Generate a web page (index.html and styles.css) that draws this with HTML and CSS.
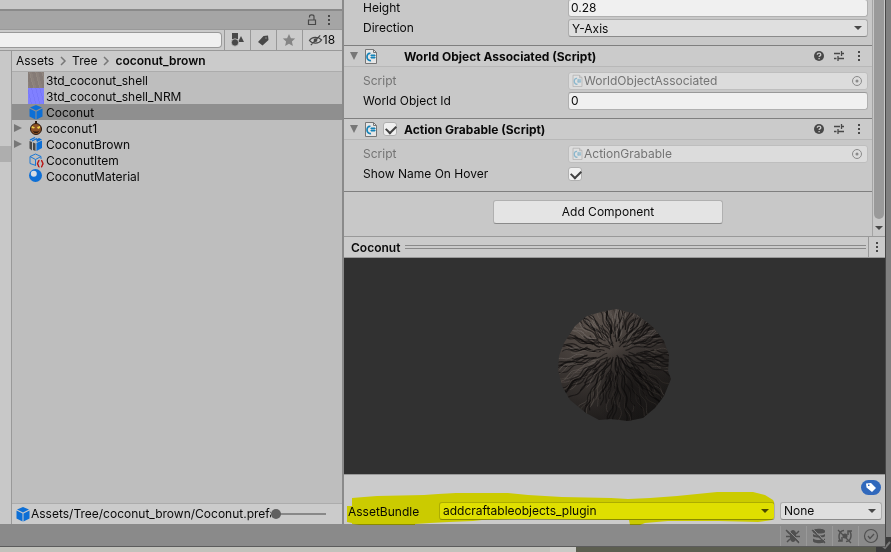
FILE: index.html
```
<!DOCTYPE html>
<html lang="en">
  <head>
    <meta charset="UTF-8" />
    <meta name="viewport" content="width=device-width, initial-scale=1.0" />
    <title>Coconut - Editor</title>
    <link rel="stylesheet" href="styles.css">
    <script src="coconut.js" defer></script>
  </head>
  <body>
    <svg class="symbols" aria-hidden="true">
      <symbol id="cube" viewBox="0 0 16 16">
        <path fill="#0d6fd6" d="M8 1l6 2.600L8 6.400 2 3.600zM1.500 4.600l6 2.800v8L1.500 12.500zM14.500 4.600l-6 2.800v8l6-2.900z"/>
      </symbol>
      <symbol id="script" viewBox="0 0 16 16">
        <path fill="#e6e6e6" stroke="#767676" d="M2.500 1.500h8l3 3v11h-11z"/>
        <path fill="none" stroke="#767676" d="M10.500 1.500v3h3"/>
        <path fill="none" stroke="#1583b8" stroke-width="1.700" d="M7.500 5.500C5 5 4 7 4 9s1.500 4 4 3.500"/>
        <path fill="none" stroke="#1583b8" d="M9 6v5M11 6v5M7.500 7.500h5M7.500 9.500h5"/>
      </symbol>
      <symbol id="dots" viewBox="0 0 16 16">
        <path fill="#484848" d="M7 3h2v2H7zM7 7h2v2H7zM7 11h2v2H7z"/>
      </symbol>
      <symbol id="help" viewBox="0 0 16 16">
        <circle cx="8" cy="8" r="5" fill="#484848"/>
        <path fill="none" stroke="#cbcbcb" stroke-width="1.300" d="M6.300 6.700c0-2.200 3.500-2.200 3.500 0 0 1.200-1.700 1.200-1.700 2.400M8.100 10v1.300"/>
      </symbol>
      <symbol id="preset" viewBox="0 0 16 16">
        <path fill="none" stroke="#484848" stroke-width="1.300" d="M3 5.500h6M11 5.500h2M10.500 3v5M3 10.500h2.500M7 8v5M7 10.500h6"/>
      </symbol>
      <symbol id="target" viewBox="0 0 16 16">
        <circle cx="8" cy="8" r="4.500" fill="none" stroke="#8a8a8a"/>
        <circle cx="8" cy="8" r="1.500" fill="#8a8a8a"/>
      </symbol>
    </svg>

    <div class="editor">
      <div class="panels">
        <section class="project">
          <div class="above"></div>
          <div class="tabs">
            <button aria-label="Lock"><svg viewBox="0 0 16 16"><path fill="none" stroke="#484848" stroke-width="1.200" d="M4.500 8h7v4.500h-7zM5.500 5.500v-1c0-2.200 4.500-2.200 4.500 0V8"/></svg></button>
            <button aria-label="Project menu"><svg><use href="#dots"/></svg></button>
          </div>
          <div class="toolbar">
            <input class="search" type="text" aria-label="Search" />
            <button aria-label="Search by type"><svg viewBox="0 0 16 16"><path fill="#484848" d="M3 1h6v6H3zM12 4l3 6H9z"/><circle cx="6" cy="10.500" r="3.700" fill="#484848" stroke="#cbcbcb" stroke-width=".8"/></svg></button>
            <button aria-label="Search by label"><svg viewBox="0 0 16 16"><path fill="#484848" fill-rule="evenodd" d="M3 10l5.500-6 4.500-.5.500 4.500-6 5.500zM10.500 5.500v1h1v-1z"/></svg></button>
            <button aria-label="Save search"><svg viewBox="0 0 16 16"><path fill="#858585" d="M8 2l1.900 4.200 4.300.4-3.300 3 1 4.400L8 11.700 4.100 14l1-4.400-3.300-3 4.300-.4z"/></svg></button>
            <button class="hidden-count"><svg viewBox="0 0 16 16"><path fill="none" stroke="#484848" stroke-width="1.300" d="M1.500 8.500C4 4.500 11 4 14.500 8c-3 4.500-10 4.500-13 .5zM3 13.500L13 3"/><circle cx="8" cy="8" r="2" fill="#484848"/></svg>18</button>
          </div>
          <div class="browser">
            <div class="tree"><div class="tree-row"></div></div>
            <div class="files">
              <nav class="crumbs">
                <a href="#">Assets</a>
                <svg viewBox="0 0 8 10"><path d="M2 1l4 4-4 4"/></svg>
                <a href="#">Tree</a>
                <svg viewBox="0 0 8 10"><path d="M2 1l4 4-4 4"/></svg>
                <a href="#" class="current">coconut_brown</a>
              </nav>
              <ul class="list">
                <li><span class="icon shell"></span>3td_coconut_shell</li>
                <li><span class="icon normal-map"></span>3td_coconut_shell_NRM</li>
                <li class="selected"><svg class="icon"><use href="#cube"/></svg>Coconut</li>
                <li class="folded"><svg class="icon" viewBox="0 0 16 16"><path fill="#2b1a10" d="M7 1h2v3H7z"/><circle cx="8" cy="9" r="5.500" fill="#8c5125" stroke="#2b1a10"/><path fill="#efd34c" d="M4 6l3 1.500-1 1L3.500 8zM9 7l3-1v2l-2 1z"/><path fill="#2b1a10" d="M4.500 10.500l2 1h3l2-1-2 2.500H6.500z"/></svg>coconut1</li>
                <li class="folded"><svg class="icon" viewBox="0 0 16 16"><path fill="#0d6fd6" d="M8 3.500l3-1.500 3 1.500-5 2.500zM8.500 7L14 4.500v7.500l-5.500 3z"/><path fill="#484848" d="M1.500 5L4 6v8.500l-2.500-2zM5 6.500l2.500 1V15L5 14z"/><path fill="none" stroke="#0d6fd6" stroke-width="1.300" d="M2 4l5-2.500M4 5l5-2.500"/></svg>CoconutBrown</li>
                <li><svg class="icon" viewBox="0 0 16 16"><path fill="none" stroke="#1c78d4" d="M8 13.500L2 11.500v-7L7.500 2 13 4.500V7M2 4.500l5.500 3L13 4.500M7.500 7.500v6"/><path fill="none" stroke="#b81414" stroke-width="1.400" d="M11.500 8.500c-2 0-.5 2.800-2.500 3.200 2 .4.500 3.300 2.500 3.300M13 8.500c2 0 .5 2.800 2.500 3.200-2 .4-.5 3.300-2.500 3.300"/></svg>CoconutItem</li>
                <li><svg class="icon" viewBox="0 0 16 16"><circle cx="7.500" cy="7.500" r="6.500" fill="#0d6fd6"/><circle cx="5.800" cy="5.800" r="3" fill="#d4dce4"/></svg>CoconutMaterial</li>
              </ul>
              <footer class="path">
                <svg class="icon"><use href="#cube"/></svg>
                <span>Assets/Tree/coconut_brown/Coconut.prefab</span>
                <input type="range" min="0" max="100" value="0" aria-label="Icon size" />
              </footer>
            </div>
          </div>
        </section>

        <section class="inspector">
          <div class="scroll">
            <div class="components">
              <div class="fields first">
                <div class="row"><label for="height">Height</label><input class="field" id="height" type="text" value="0.28" /></div>
                <div class="row"><label for="direction">Direction</label><div class="dropdown"><select class="field" id="direction"><option>Y-Axis</option></select></div></div>
              </div>
              <div class="component">
                <header>
                  <span class="fold"></span><svg class="icon"><use href="#script"/></svg>
                  <span class="tick"></span>
                  <h2>World Object Associated (Script)</h2>
                  <button aria-label="Help"><svg><use href="#help"/></svg></button>
                  <button aria-label="Presets"><svg><use href="#preset"/></svg></button>
                  <button aria-label="Component menu"><svg><use href="#dots"/></svg></button>
                </header>
                <div class="fields">
                  <div class="row disabled"><span class="label">Script</span><div class="field object"><svg><use href="#script"/></svg><span>WorldObjectAssociated</span><svg><use href="#target"/></svg></div></div>
                  <div class="row"><label for="world-id">World Object Id</label><input class="field" id="world-id" type="text" value="0" /></div>
                </div>
              </div>
              <div class="component">
                <header>
                  <span class="fold"></span><svg class="icon"><use href="#script"/></svg>
                  <span class="tick"><input type="checkbox" checked aria-label="Enable Action Grabable" /></span>
                  <h2>Action Grabable (Script)</h2>
                  <button aria-label="Help"><svg><use href="#help"/></svg></button>
                  <button aria-label="Presets"><svg><use href="#preset"/></svg></button>
                  <button aria-label="Component menu"><svg><use href="#dots"/></svg></button>
                </header>
                <div class="fields">
                  <div class="row disabled"><span class="label">Script</span><div class="field object"><svg><use href="#script"/></svg><span>ActionGrabable</span><svg><use href="#target"/></svg></div></div>
                  <div class="row"><label for="show-name">Show Name On Hover</label><input id="show-name" type="checkbox" checked /></div>
                </div>
              </div>
              <div class="add"><button>Add Component</button></div>
            </div>
            <div class="scrollbar"><div class="thumb"></div><span class="down"></span></div>
          </div>
          <div class="preview-title">
            <h2>Coconut</h2><span class="grip"></span>
            <button aria-label="Preview menu"><svg><use href="#dots"/></svg></button>
          </div>
          <div class="preview">
            <svg id="coconut" viewBox="0 0 114 114">
              <defs>
                <radialGradient id="husk" cx=".3" cy=".15" r=".9">
                  <stop offset="0" stop-color="#5a514b"/>
                  <stop offset=".45" stop-color="#3f3936"/>
                  <stop offset="1" stop-color="#1a1817"/>
                </radialGradient>
                <radialGradient id="shade" cx=".64" cy=".68" r=".36">
                  <stop offset="0" stop-color="#0a0909" stop-opacity=".6"/>
                  <stop offset="1" stop-color="#0a0909" stop-opacity="0"/>
                </radialGradient>
                <clipPath id="outline"><path d="M29 7L43 3 58 0 78 5 95 18 106 32 111 46 110 62 113 70 106 87 97 99 85 109 70 112 53 110 41 111 28 104 12 91 4 77 0 61 1 47 6 34 17 17z"/></clipPath>
              </defs>
              <g clip-path="url(#outline)">
                <rect width="114" height="114" fill="url(#husk)"/>
                <g id="ridges"></g>
                <rect width="114" height="114" fill="url(#shade)"/>
              </g>
            </svg>
          </div>
          <div class="bundle">
            <div class="tags"><button aria-label="Asset labels"><svg viewBox="0 0 20 15"><path fill="#fff" fill-rule="evenodd" d="M5 3.500l5-.5 5 5-4 4-5.500-4.500zM7 4.500v1.500h1.500V4.500z"/></svg></button></div>
            <div class="bundle-row">
              <label for="bundle">AssetBundle</label>
              <div class="dropdown name"><select class="field" id="bundle"><option>addcraftableobjects_plugin</option></select></div>
              <div class="dropdown variant"><select class="field" aria-label="Variant"><option>None</option></select></div>
            </div>
            <svg class="marker" viewBox="0 0 541 50" preserveAspectRatio="none"><path fill="#ff0" d="M3 31h5v-8l12-1 13-1 47-1 14-1 18-1h52l20 2 34 2 49 1 17 1 22-1 27-2 40-4h36l12 3 8 5 1 2v16l-2 2-14 2-39-1h-51l-23 2-5 2h-10l-1-5h-20l-89-1-38 1-9 1-24 1-19 1-15 1v1H15l-7-1v-1l-5-1z"/></svg>
          </div>
        </section>
      </div>

      <footer class="status">
        <button aria-label="Debugger"><svg viewBox="0 0 16 16"><path fill="#505050" d="M5 5c1-4 5-4 6 0v6c-1 4-5 4-6 0z"/><path stroke="#505050" stroke-width="1.500" d="M2 3l3 3M14 3l-3 3M1 8.500h14M2 14l3-3M14 14l-3-3"/><path stroke="#8a8a8a" d="M2 1l13 13"/><path stroke="#505050" stroke-width="1.300" d="M1 2l13 13"/></svg></button>
        <button aria-label="Cache server"><svg viewBox="0 0 16 16"><path fill="#505050" d="M2 3c0-3 12-3 12 0v1c0 2-12 2-12 0zM2 6c3 2 9 2 12 0v2c0 2-12 2-12 0zM2 10.500c3 2 9 2 12 0V13c0 3-12 3-12 0z"/><path stroke="#8a8a8a" d="M2 1l13 13"/><path stroke="#505050" stroke-width="1.300" d="M1 2l13 13"/></svg></button>
        <button aria-label="Auto refresh"><svg viewBox="0 0 16 16"><path fill="none" stroke="#505050" stroke-width="1.500" d="M7 2.500C1 3 1 11 4 13M9 13.500c6-.5 6-8.500 3-10.500M1 13h4V9M15 3h-4v4"/><circle cx="8" cy="8" r="2.500" fill="#505050"/><path stroke="#505050" stroke-width="1.300" d="M1 2l13 13"/></svg></button>
        <button aria-label="Progress"><svg viewBox="0 0 16 16"><circle cx="8" cy="8" r="6.500" fill="none" stroke="#505050" stroke-width="1.200"/><path fill="none" stroke="#505050" stroke-width="1.300" d="M5 8l2 2.500L11 6"/></svg></button>
      </footer>
    </div>
    <div class="desktop"><svg viewBox="0 0 15 15"><path fill="none" stroke="#777" stroke-width="2" d="M5 8l4 3 5-6"/></svg></div>
  </body>
</html>
```
FILE: styles.css
```
* {
  margin: 0;
  padding: 0;
  box-sizing: border-box;
}
body {
  position: relative;
  height: 100vh;
  padding: 0 5px 5px 0;
  overflow: hidden;
  background-color: #808080;
  color: #090909;
  font: 12px/16px Inter, "Liberation Sans", sans-serif;
}
button,
input,
select {
  font: inherit;
  color: inherit;
  outline: none;
}
button {
  display: flex;
  align-items: center;
  justify-content: center;
  border: none;
  background: none;
}
svg {
  display: block;
  flex: none;
  width: 16px;
  height: 16px;
}
a {
  color: inherit;
  text-decoration: none;
}
h2 {
  font-size: 12px;
  font-weight: 700;
}
.symbols {
  position: absolute;
  width: 0;
  height: 0;
}
.editor {
  position: relative;
  z-index: 1;
  display: flex;
  flex-direction: column;
  height: 100%;
  border-right: 1px solid #484848;
  border-bottom: 1px solid #5c5c5c;
}
.panels {
  display: flex;
  flex: 1;
  min-height: 0;
}

/* project window */
.project {
  display: flex;
  flex-direction: column;
  width: 344px;
  border-right: 2px solid #8a8a8a;
  background-color: #cbcbcb;
}
.above {
  height: 11px;
  border-bottom: 2px solid #8a8a8a;
  background-color: #c8c8c8;
}
.tabs {
  display: flex;
  justify-content: flex-end;
  height: 18px;
  padding-right: 5px;
  background-color: #a5a5a5;
}
.tabs button {
  width: 17px;
}
.toolbar {
  display: flex;
  height: 22px;
  border-top: 1px solid #999;
  border-bottom: 1px solid #999;
}
.search {
  flex: 1;
  min-width: 0;
  height: 16px;
  margin: 2px 2px 0 0;
  border: 1px solid #999;
  border-left: none;
  border-radius: 0 4px 4px 0;
  background-color: #f0f0f0;
}
.toolbar button {
  width: 26px;
  padding-right: 2px;
  border-left: 1px solid #999;
}
.toolbar .hidden-count {
  width: 40px;
}
.hidden-count svg {
  width: 15px;
}
.browser {
  display: flex;
  flex: 1;
  min-height: 0;
}
.tree {
  width: 12px;
  padding-top: 95px;
  border-right: 1px solid #999;
  background-color: #c8c8c8;
}
.tree-row {
  height: 16px;
  background-color: #aeaeae;
}
.files {
  display: flex;
  flex: 1;
  flex-direction: column;
  min-width: 0;
  background-color: #bebebe;
}
.crumbs {
  display: flex;
  align-items: center;
  gap: 5px;
  height: 21px;
  padding-left: 4px;
  border-bottom: 1px solid #acacac;
  background-color: #cbcbcb;
}
.crumbs svg {
  width: 8px;
  height: 10px;
  fill: none;
  stroke: #777;
  stroke-width: 1.5;
}
.current {
  font-weight: 600;
}
.list {
  flex: 1;
  list-style: none;
}
.list li {
  position: relative;
  display: flex;
  gap: 2px;
  height: 16px;
  padding-left: 16px;
  line-height: 18px;
}
.list .selected {
  background-color: #8f8f8f;
}
.folded::before {
  content: "";
  position: absolute;
  top: 4px;
  left: 2px;
  border: 4px solid transparent;
  border-right: none;
  border-left: 8px solid #777;
}
.icon {
  width: 16px;
  height: 16px;
}
.shell {
  background: repeating-linear-gradient(75deg, #8b817b 0 2px, #857b76 2px 5px, #91877f 5px 6px);
}
.normal-map {
  background: repeating-linear-gradient(75deg, #8080ff 0 3px, #7878fa 3px 4px);
}
.path {
  display: flex;
  align-items: center;
  height: 21px;
  padding: 0 16px 0 3px;
  border-top: 1px solid #acacac;
  background-color: #cbcbcb;
}
.path span {
  flex: 1;
  overflow: hidden;
  white-space: nowrap;
}
.path input {
  width: 55px;
  height: 16px;
  appearance: none;
  background: linear-gradient(#888, #888) center / 100% 2px no-repeat;
}
.path input::-webkit-slider-thumb {
  width: 10px;
  height: 10px;
  appearance: none;
  border-radius: 50%;
  background-color: #606060;
}

/* inspector */
.inspector {
  display: flex;
  flex: 1;
  flex-direction: column;
  min-width: 0;
  background-color: #c8c8c8;
}
.scroll {
  display: flex;
  overflow: hidden;
}
.components {
  flex: 1;
  min-width: 0;
}
.fields {
  display: flex;
  flex-direction: column;
  gap: 2px;
  padding: 4px 4px 9px 19px;
}
.first {
  margin-top: -2px;
  padding-top: 0;
}
.row {
  display: grid;
  grid-template-columns: 205px 1fr;
  align-items: center;
  height: 18px;
  line-height: 18px;
}
.row label,
.label {
  padding-top: 1px;
}
.field {
  width: 100%;
  height: 18px;
  padding: 0 2px;
  border: 1px solid #b0b0b0;
  border-top-color: #999;
  border-radius: 3px;
  background-color: #f0f0f0;
}
.dropdown {
  position: relative;
}
.dropdown select {
  display: block;
  padding: 0 3px;
  appearance: none;
  border-color: #adadad;
  border-bottom-color: #8a8a8a;
  background-color: #dfdfdf;
}
.dropdown::after,
.down {
  border: 4px solid transparent;
  border-top-color: #484848;
  border-bottom: none;
}
.dropdown::after {
  content: "";
  position: absolute;
  top: 7px;
  right: 6px;
}
.disabled {
  color: #747474;
}
.object {
  display: flex;
  align-items: center;
  border-color: #bebebe;
  background-color: #dcdcdc;
}
.object span {
  flex: 1;
  padding-top: 1px;
}
.object svg:first-child {
  width: 13px;
  height: 13px;
  opacity: 0.4;
}
.component {
  border-top: 1px solid #7f7f7f;
}
.component header {
  display: flex;
  align-items: center;
  height: 21px;
  padding: 0 3px 0 6px;
  border-bottom: 1px solid #b8b8b8;
  background-color: #cbcbcb;
}
.component h2 {
  flex: 1;
  padding-top: 1px;
}
.component header button {
  width: 20px;
}
.component header .icon {
  margin-left: 5px;
}
.fold {
  border: 4px solid transparent;
  border-top: 8px solid #777;
  border-bottom: none;
}
.tick {
  width: 25px;
  padding-left: 4px;
}
input[type="checkbox"] {
  display: block;
  position: relative;
  width: 14px;
  height: 14px;
  appearance: none;
  border: 1px solid #b0b0b0;
  border-radius: 3px;
  background-color: #f0f0f0;
}
input[type="checkbox"]:checked::after {
  content: "";
  position: absolute;
  top: 2px;
  left: 2px;
  width: 8px;
  height: 5px;
  border: solid #404040;
  border-width: 0 0 2px 2px;
  transform: rotate(-45deg);
}
.add {
  height: 45px;
  padding-top: 8px;
  border-top: 1px solid #7f7f7f;
}
.add button {
  width: 230px;
  height: 24px;
  margin: 0 auto;
  border: 1px solid #b0b0b0;
  border-bottom-color: #8a8a8a;
  border-radius: 3px;
  background-color: #e4e4e4;
}
.scrollbar {
  display: flex;
  flex-direction: column;
  align-items: center;
  width: 13px;
  padding-bottom: 6px;
  border-left: 1px solid #a5a5a5;
  background-color: #c8c8c8;
}
.thumb {
  flex: 1;
  width: 10px;
  margin-bottom: 7px;
  border-radius: 0 0 5px 5px;
  background-color: #9a9a9a;
}
.preview-title {
  display: flex;
  align-items: center;
  height: 22px;
  padding-left: 7px;
  border-top: 1px solid #999;
  border-bottom: 1px solid #999;
  background-color: #cbcbcb;
}
.preview-title h2 {
  padding-top: 1px;
  font-weight: 600;
}
.grip {
  flex: 1;
  height: 4px;
  margin: 0 2px 0 5px;
  border: solid #8a8a8a;
  border-width: 1px 0;
}
.preview-title button {
  width: 17px;
  height: 20px;
  border-left: 1px solid #999;
}
.preview {
  display: flex;
  flex: 1;
  align-items: center;
  justify-content: center;
  min-height: 0;
  background-color: #313131;
}
.preview svg {
  width: 114px;
  height: 114px;
}
.bundle {
  position: relative;
  height: 50px;
  padding: 5px 3px 0 4px;
  border-top: 1px solid #999;
  background-color: #cbcbcb;
}
.tags {
  display: flex;
  justify-content: flex-end;
}
.tags button {
  width: 20px;
  height: 15px;
  margin-right: 1px;
  border-radius: 8px;
  background-color: #3068bc;
}
.tags svg {
  width: 20px;
  height: 15px;
}
.bundle-row {
  display: flex;
  align-items: center;
  margin-top: 7px;
}
.bundle-row label {
  width: 91px;
  padding-top: 1px;
}
.name {
  flex: 1;
  margin-right: 5px;
}
.variant {
  width: 102px;
}
.marker {
  position: absolute;
  top: 0;
  left: 0;
  width: 100%;
  height: 50px;
  mix-blend-mode: multiply;
  pointer-events: none;
}

/* bottom of the window */
.status {
  display: flex;
  justify-content: flex-end;
  height: 22px;
  padding: 2px 1px 0 0;
  background-color: #8a8a8a;
}
.status button {
  width: 26px;
  padding-right: 2px;
  border-left: 1px solid #999;
}
.desktop {
  position: absolute;
  right: 0;
  bottom: 0;
  left: 0;
  display: flex;
  justify-content: flex-end;
  height: 15px;
  background: linear-gradient(to right, #c2c2bc 550px, #cacac6 550px 576px, #5c5e50 576px);
}
.desktop svg {
  width: 15px;
  height: 15px;
  background-color: #3c3c3c;
}
```
FILE: coconut.js
```
// husk ridges run from the crown at (58, 42) out to the rim
var ridges = document.getElementById("ridges");
var seed = 7;

function random() {
  seed = (seed * 16807) % 2147483647;
  return seed / 2147483647;
}

function ridge(angle, start, end, color, width) {
  var phase = random() * 6;
  var bend = (random() - 0.5) * 0.6;
  var d = "";
  for (var r = start; r < end; r += 2) {
    var a = angle + bend * (r / 80) + (Math.sin(r / 3 + phase) * 1.5) / (r + 8);
    var x = 58 + Math.cos(a) * r;
    var y = 42 + Math.sin(a) * r;
    d += (d ? "L" : "M") + x.toFixed(1) + " " + y.toFixed(1);
  }
  var path = document.createElementNS("http://www.w3.org/2000/svg", "path");
  path.setAttribute("d", d);
  path.setAttribute("fill", "none");
  path.setAttribute("stroke", color);
  path.setAttribute("stroke-width", width);
  ridges.appendChild(path);
}

for (var i = 0; i < 120; i++) {
  var angle = (i / 120) * Math.PI * 2 + random() * 0.04;
  // light falls from the upper left
  var lit = 0.5 - 0.5 * Math.sin(angle + 0.6);
  var start = 4 + random() * 26;
  var tone = Math.round(62 + lit * 46 + random() * 18);
  ridge(angle, start, start + 15 + random() * 60, "rgba(14,12,12,0.6)", 1.2);
  ridge(angle + 0.03, start + random() * 20, 30 + random() * 55, "rgba(" + tone + "," + (tone - 7) + "," + (tone - 12) + ",0.6)", 0.9);
}
```
